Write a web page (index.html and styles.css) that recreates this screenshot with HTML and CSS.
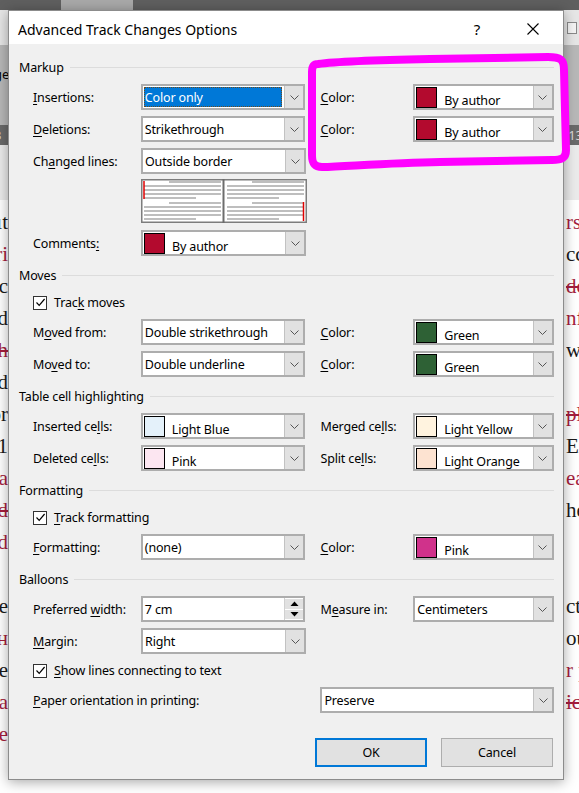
FILE: index.html
```html
<!DOCTYPE html>
<html lang="en">
<head>
<meta charset="utf-8">
<title>Advanced Track Changes Options</title>
<link rel="stylesheet" href="styles.css">
</head>
<body>
<div class="screen">
  <div class="topbar"><div class="tab"></div></div>
  <div class="ribbon">
    <div class="band b1"><span class="rbox"></span></div>
    <div class="band b2"><span class="rl">ge</span></div>
    <div class="band b3"><span class="rl">3</span><span class="rr">13</span></div>
    <div class="band b4"></div>
  </div>
  <div class="doc">
    <div class="line"><span class="l">ıt</span><span class="r red">rs</span></div>
    <div class="line"><span class="l red">ri</span><span class="r">cc</span></div>
    <div class="line"><span class="l">c</span><span class="r red strike">do</span></div>
    <div class="line"><span class="l">d</span><span class="r red">nf</span></div>
    <div class="line"><span class="l red strike">ah</span><span class="r">wa</span></div>
    <div class="line"><span class="l">d</span><span class="r"></span></div>
    <div class="line"><span class="l">or</span><span class="r red strike">pl</span></div>
    <div class="line"><span class="l">1</span><span class="r">Ex</span></div>
    <div class="line"><span class="l red">a</span><span class="r red">ea</span></div>
    <div class="line"><span class="l red strike">d</span><span class="r">he</span></div>
    <div class="line"><span class="l red">d</span><span class="r"></span></div>
    <div class="line"><span class="l"></span><span class="r"></span></div>
    <div class="line"><span class="l">ae</span><span class="r">cto</span></div>
    <div class="line"><span class="l red">н</span><span class="r">ou</span></div>
    <div class="line"><span class="l">e</span><span class="r red">r p</span></div>
    <div class="line"><span class="l red">a</span><span class="r red strike">ic</span></div>
    <div class="line"><span class="l red">te</span><span class="r"></span></div>
  </div>

  <div class="dialog">
    <div class="titlebar">
      <span class="title">Advanced Track Changes Options</span>
      <span class="help">?</span>
      <span class="close"><svg width="12" height="12" viewBox="0 0 12 12"><path d="M0.5 0.5 L11.5 11.5 M11.5 0.5 L0.5 11.5" stroke="#000" stroke-width="1.1" fill="none"/></svg></span>
    </div>
    <div class="content">
      <div class="sec-head first"><span>Markup</span></div>
      <div class="row">
        <span class="lbl"><u>I</u>nsertions:</span>
        <div class="combo w1"><span class="val sel">Color only</span><span class="btn"><svg width="9" height="5" viewBox="0 0 9 5"><path d="M0.5 0.5 L4.5 4.5 L8.5 0.5" fill="none" stroke="#555"/></svg></span></div>
        <span class="lbl2"><u>C</u>olor:</span>
        <div class="combo w2 color"><span class="sw sw-red"></span><span class="val">By author</span><span class="btn"><svg width="9" height="5" viewBox="0 0 9 5"><path d="M0.5 0.5 L4.5 4.5 L8.5 0.5" fill="none" stroke="#555"/></svg></span></div>
      </div>
      <div class="row">
        <span class="lbl"><u>D</u>eletions:</span>
        <div class="combo w1"><span class="val">Strikethrough</span><span class="btn"><svg width="9" height="5" viewBox="0 0 9 5"><path d="M0.5 0.5 L4.5 4.5 L8.5 0.5" fill="none" stroke="#555"/></svg></span></div>
        <span class="lbl2"><u>C</u>olor:</span>
        <div class="combo w2 color"><span class="sw sw-red"></span><span class="val">By author</span><span class="btn"><svg width="9" height="5" viewBox="0 0 9 5"><path d="M0.5 0.5 L4.5 4.5 L8.5 0.5" fill="none" stroke="#555"/></svg></span></div>
      </div>
      <div class="row">
        <span class="lbl">Ch<u>a</u>nged lines:</span>
        <div class="combo w1"><span class="val">Outside border</span><span class="btn"><svg width="9" height="5" viewBox="0 0 9 5"><path d="M0.5 0.5 L4.5 4.5 L8.5 0.5" fill="none" stroke="#555"/></svg></span></div>
      </div>
      <div class="preview-row">
        <svg class="preview" width="166" height="44" viewBox="0 0 166 44">
          <rect x="0.75" y="0.75" width="164.5" height="42.5" fill="#fff" stroke="#7d7d7d" stroke-width="1.5"/>
          <line x1="82.5" y1="0" x2="82.5" y2="44" stroke="#6d6d6d" stroke-width="2"/>
          <g stroke="#a8a8a8" stroke-width="1.5">
            <line x1="28" y1="3" x2="80" y2="3"/>
            <line x1="3" y1="7" x2="80" y2="7"/>
            <line x1="3" y1="11" x2="80" y2="11"/>
            <line x1="3" y1="15" x2="80" y2="15"/>
            <line x1="3" y1="19" x2="55" y2="19"/>
            <line x1="28" y1="24" x2="80" y2="24"/>
            <line x1="3" y1="28" x2="80" y2="28"/>
            <line x1="3" y1="32" x2="80" y2="32"/>
            <line x1="3" y1="36" x2="80" y2="36"/>
            <line x1="3" y1="40" x2="55" y2="40"/>
            <line x1="111" y1="3" x2="163" y2="3"/>
            <line x1="86" y1="7" x2="163" y2="7"/>
            <line x1="86" y1="11" x2="163" y2="11"/>
            <line x1="86" y1="15" x2="163" y2="15"/>
            <line x1="86" y1="19" x2="138" y2="19"/>
            <line x1="111" y1="24" x2="163" y2="24"/>
            <line x1="86" y1="28" x2="163" y2="28"/>
            <line x1="86" y1="32" x2="163" y2="32"/>
            <line x1="86" y1="36" x2="163" y2="36"/>
            <line x1="86" y1="40" x2="138" y2="40"/>
          </g>
          <line x1="3" y1="2" x2="3" y2="20" stroke="#e00000" stroke-width="1.5"/>
          <line x1="162.5" y1="23" x2="162.5" y2="42" stroke="#e00000" stroke-width="1.5"/>
        </svg>
      </div>
      <div class="row">
        <span class="lbl">Comments<u>:</u></span>
        <div class="combo w1 color"><span class="sw sw-red"></span><span class="val">By author</span><span class="btn"><svg width="9" height="5" viewBox="0 0 9 5"><path d="M0.5 0.5 L4.5 4.5 L8.5 0.5" fill="none" stroke="#555"/></svg></span></div>
      </div>

      <div class="sec-head"><span>Moves</span></div>
      <div class="check">
        <span class="box"><svg width="11" height="11" viewBox="0 0 11 11"><path d="M1.5 5.5 L4.2 8.3 L9.6 2" fill="none" stroke="#000" stroke-width="1.2"/></svg></span>
        <span class="ctext">Trac<u>k</u> moves</span>
      </div>
      <div class="row">
        <span class="lbl">M<u>o</u>ved from:</span>
        <div class="combo w1"><span class="val">Double strikethrough</span><span class="btn"><svg width="9" height="5" viewBox="0 0 9 5"><path d="M0.5 0.5 L4.5 4.5 L8.5 0.5" fill="none" stroke="#555"/></svg></span></div>
        <span class="lbl2"><u>C</u>olor:</span>
        <div class="combo w2 color"><span class="sw sw-green"></span><span class="val">Green</span><span class="btn"><svg width="9" height="5" viewBox="0 0 9 5"><path d="M0.5 0.5 L4.5 4.5 L8.5 0.5" fill="none" stroke="#555"/></svg></span></div>
      </div>
      <div class="row">
        <span class="lbl">Mo<u>v</u>ed to:</span>
        <div class="combo w1"><span class="val">Double underline</span><span class="btn"><svg width="9" height="5" viewBox="0 0 9 5"><path d="M0.5 0.5 L4.5 4.5 L8.5 0.5" fill="none" stroke="#555"/></svg></span></div>
        <span class="lbl2"><u>C</u>olor:</span>
        <div class="combo w2 color"><span class="sw sw-green"></span><span class="val">Green</span><span class="btn"><svg width="9" height="5" viewBox="0 0 9 5"><path d="M0.5 0.5 L4.5 4.5 L8.5 0.5" fill="none" stroke="#555"/></svg></span></div>
      </div>

      <div class="sec-head"><span>Table cell highlighting</span></div>
      <div class="row">
        <span class="lbl">Inserted ce<u>l</u>ls:</span>
        <div class="combo w1 color"><span class="sw sw-lblue"></span><span class="val">Light Blue</span><span class="btn"><svg width="9" height="5" viewBox="0 0 9 5"><path d="M0.5 0.5 L4.5 4.5 L8.5 0.5" fill="none" stroke="#555"/></svg></span></div>
        <span class="lbl2">Merged ce<u>l</u>ls:</span>
        <div class="combo w2 color"><span class="sw sw-lyellow"></span><span class="val">Light Yellow</span><span class="btn"><svg width="9" height="5" viewBox="0 0 9 5"><path d="M0.5 0.5 L4.5 4.5 L8.5 0.5" fill="none" stroke="#555"/></svg></span></div>
      </div>
      <div class="row">
        <span class="lbl">Deleted ce<u>l</u>ls:</span>
        <div class="combo w1 color"><span class="sw sw-pink"></span><span class="val">Pink</span><span class="btn"><svg width="9" height="5" viewBox="0 0 9 5"><path d="M0.5 0.5 L4.5 4.5 L8.5 0.5" fill="none" stroke="#555"/></svg></span></div>
        <span class="lbl2">Split ce<u>l</u>ls:</span>
        <div class="combo w2 color"><span class="sw sw-lorange"></span><span class="val">Light Orange</span><span class="btn"><svg width="9" height="5" viewBox="0 0 9 5"><path d="M0.5 0.5 L4.5 4.5 L8.5 0.5" fill="none" stroke="#555"/></svg></span></div>
      </div>

      <div class="sec-head"><span>Formatting</span></div>
      <div class="check">
        <span class="box"><svg width="11" height="11" viewBox="0 0 11 11"><path d="M1.5 5.5 L4.2 8.3 L9.6 2" fill="none" stroke="#000" stroke-width="1.2"/></svg></span>
        <span class="ctext"><u>T</u>rack formatting</span>
      </div>
      <div class="row">
        <span class="lbl"><u>F</u>ormatting:</span>
        <div class="combo w1"><span class="val">(none)</span><span class="btn"><svg width="9" height="5" viewBox="0 0 9 5"><path d="M0.5 0.5 L4.5 4.5 L8.5 0.5" fill="none" stroke="#555"/></svg></span></div>
        <span class="lbl2"><u>C</u>olor:</span>
        <div class="combo w2 color"><span class="sw sw-magenta"></span><span class="val">Pink</span><span class="btn"><svg width="9" height="5" viewBox="0 0 9 5"><path d="M0.5 0.5 L4.5 4.5 L8.5 0.5" fill="none" stroke="#555"/></svg></span></div>
      </div>

      <div class="sec-head"><span>Balloons</span></div>
      <div class="row">
        <span class="lbl">Preferred <u>w</u>idth:</span>
        <div class="combo w1 spin"><span class="val">7 cm</span>
          <span class="spinbtns">
            <span class="sb"><svg width="9" height="5" viewBox="0 0 9 5"><path d="M0.5 5 L4.5 0.5 L8.5 5 Z" fill="#000"/></svg></span>
            <span class="sb"><svg width="9" height="5" viewBox="0 0 9 5"><path d="M0.5 0 L4.5 4.5 L8.5 0 Z" fill="#000"/></svg></span>
          </span>
        </div>
        <span class="lbl2">M<u>e</u>asure in:</span>
        <div class="combo w2"><span class="val">Centimeters</span><span class="btn"><svg width="9" height="5" viewBox="0 0 9 5"><path d="M0.5 0.5 L4.5 4.5 L8.5 0.5" fill="none" stroke="#555"/></svg></span></div>
      </div>
      <div class="row">
        <span class="lbl"><u>M</u>argin:</span>
        <div class="combo w1"><span class="val">Right</span><span class="btn"><svg width="9" height="5" viewBox="0 0 9 5"><path d="M0.5 0.5 L4.5 4.5 L8.5 0.5" fill="none" stroke="#555"/></svg></span></div>
      </div>
      <div class="check">
        <span class="box"><svg width="11" height="11" viewBox="0 0 11 11"><path d="M1.5 5.5 L4.2 8.3 L9.6 2" fill="none" stroke="#000" stroke-width="1.2"/></svg></span>
        <span class="ctext"><u>S</u>how lines connecting to text</span>
      </div>
      <div class="row">
        <span class="lbl wide"><u>P</u>aper orientation in printing:</span>
        <div class="combo w3"><span class="val">Preserve</span><span class="btn"><svg width="9" height="5" viewBox="0 0 9 5"><path d="M0.5 0.5 L4.5 4.5 L8.5 0.5" fill="none" stroke="#555"/></svg></span></div>
      </div>

      <div class="buttons">
        <span class="button default">OK</span>
        <span class="button">Cancel</span>
      </div>
    </div>
  </div>

  <svg class="scribble" width="579" height="793" viewBox="0 0 579 793">
    <path d="M318 64 C 340 61, 380 60, 430 59 L 548 57 C 560 57, 564 59, 564 70 L 566 150 C 566 158, 562 160, 552 160 L 440 162 C 390 163, 350 166, 322 167 C 314 167, 312 163, 312 155 L 312 72 C 312 66, 314 64, 318 64 Z" fill="none" stroke="#ff00ff" stroke-width="8" stroke-linejoin="round"/>
  </svg>
</div>
</body>
</html>
```

FILE: styles.css
```css
* { box-sizing: border-box; }

html, body {
  margin: 0;
  padding: 0;
}

body {
  width: 579px;
  height: 793px;
  overflow: hidden;
  background: #ffffff;
  font-family: "Noto Sans", "Open Sans", sans-serif;
}

.screen {
  position: relative;
  width: 579px;
  height: 793px;
  overflow: hidden;
}

/* ---------- background application ---------- */
.topbar {
  display: flex;
  height: 10px;
  background: #5f5f5f;
}
.tab {
  margin-left: 61px;
  width: 72px;
  background: #a9a9a9;
}

.ribbon {
  display: flex;
  flex-direction: column;
}
.band {
  display: flex;
  align-items: center;
  justify-content: space-between;
  font-size: 13px;
}
.b1 { height: 35px; background: #e6e6e6; justify-content: flex-end; }
.b2 { height: 80px; background: #b8b8b8; align-items: flex-start; padding-top: 20px; }
.b3 { height: 20px; background: #6a6a6a; color: #d8d8d8; }
.b4 { height: 55px; background: #ebebeb; }

.rbox {
  width: 10px;
  height: 12px;
  margin-right: 2px;
  border: 1px solid #8a8a8a;
  background: #f4f4f4;
}
.rl { margin-left: -6px; }
.rr { margin-right: -4px; }

.doc {
  padding-top: 6px;
  font-family: "Liberation Serif", serif;
  font-size: 21px;
  color: #1a1a1a;
}
.line {
  display: flex;
  height: 32px;
  line-height: 32px;
  white-space: nowrap;
}
.l {
  width: 8px;
  display: flex;
  justify-content: flex-end;
  overflow: hidden;
}
.r {
  margin-left: auto;
  width: 13px;
  overflow: hidden;
}
.red { color: #a51d3d; }
.strike { text-decoration: line-through; }

/* ---------- dialog ---------- */
.dialog {
  position: absolute;
  left: 8px;
  top: 10px;
  width: 556px;
  height: 770px;
  background: #f0f0f0;
  border: 1px solid #8c8c8c;
  box-shadow: 0 2px 12px rgba(0, 0, 0, 0.35);
  display: flex;
  flex-direction: column;
}

.titlebar {
  height: 33px;
  background: #ffffff;
  display: flex;
  align-items: center;
  padding-left: 9px;
  padding-right: 7px;
  padding-top: 3px;
  font-size: 14px;
  color: #000;
}
.title { flex: 1; }
.help {
  width: 46px;
  text-align: center;
  margin-right: 10px;
  font-size: 15px;
}
.close {
  width: 46px;
  display: flex;
  justify-content: center;
  align-items: center;
}

.content {
  flex: 1;
  padding: 13px 9px 0 10px;
  font-size: 12.5px;
  letter-spacing: -0.15px;
  color: #000;
  display: flex;
  flex-direction: column;
}

u { text-decoration: underline; text-underline-offset: 2px; }

.sec-head {
  height: 20px;
  display: flex;
  align-items: center;
  margin-top: 6px;
  margin-bottom: 4px;
}
.sec-head.first { margin-top: 0; }
.sec-head::after {
  content: "";
  flex: 1;
  height: 1px;
  background: #dcdcdc;
  margin-left: 6px;
}

.row {
  height: 32px;
  display: flex;
  align-items: center;
  padding-left: 14px;
}
.lbl { width: 108px; }
.lbl.wide { width: 288px; }
.lbl2 { width: 93px; margin-left: 15px; }

.preview-row {
  display: flex;
  padding-left: 122px;
  margin-top: 2px;
  margin-bottom: 5px;
  height: 43px;
}
.preview { display: block; }

.combo {
  height: 26px;
  display: flex;
  align-items: stretch;
  background: #ffffff;
  border: 2px solid #adadad;
}
.w1 { width: 165px; }
.w2 { width: 141px; }
.w3 { width: 234px; }

.val {
  flex: 1;
  display: flex;
  align-items: center;
  padding-left: 2px;
  white-space: nowrap;
  overflow: hidden;
}
.val.sel {
  margin: 1px 2px 1px 1px;
  padding-left: 1px;
  background: #0078d7;
  color: #ffffff;
  outline: 1px dotted #6b4a1e;
  outline-offset: -1px;
}
.color .val {
  padding-left: 7px;
  padding-top: 6px;
}

.btn {
  width: 19px;
  background: #e1e1e1;
  border-left: 1px solid #c2c2c2;
  display: flex;
  align-items: center;
  justify-content: center;
}

.sw {
  align-self: center;
  width: 21px;
  height: 21px;
  margin-left: 1px;
  border: 1px solid #000;
}
.sw-red { background: #b30a2e; }
.sw-green { background: #2e6135; }
.sw-lblue { background: #e4f1fa; }
.sw-pink { background: #fce6f1; }
.sw-lyellow { background: #fff3df; }
.sw-lorange { background: #fde3d1; }
.sw-magenta { background: #d0328b; }

.spinbtns {
  width: 19px;
  display: flex;
  flex-direction: column;
  gap: 1px;
  padding: 1px 0;
  border-left: 1px solid #d0d0d0;
}
.sb {
  flex: 1;
  background: #e1e1e1;
  display: flex;
  align-items: center;
  justify-content: center;
}

.check {
  height: 27px;
  display: flex;
  align-items: center;
  padding-left: 14px;
}
.box {
  width: 14px;
  height: 14px;
  border: 1px solid #333;
  background: #ffffff;
  display: flex;
  align-items: center;
  justify-content: center;
}
.ctext { margin-left: 7px; }

.buttons {
  margin-top: 22px;
  display: flex;
  justify-content: flex-end;
  gap: 14px;
  padding-right: 1px;
}
.button {
  width: 112px;
  height: 29px;
  display: flex;
  align-items: center;
  justify-content: center;
  background: #e1e1e1;
  border: 1px solid #adadad;
}
.button.default {
  border: 2px solid #0078d7;
}

/* ---------- annotation ---------- */
.scribble {
  position: absolute;
  left: 0;
  top: 0;
  pointer-events: none;
}
```
